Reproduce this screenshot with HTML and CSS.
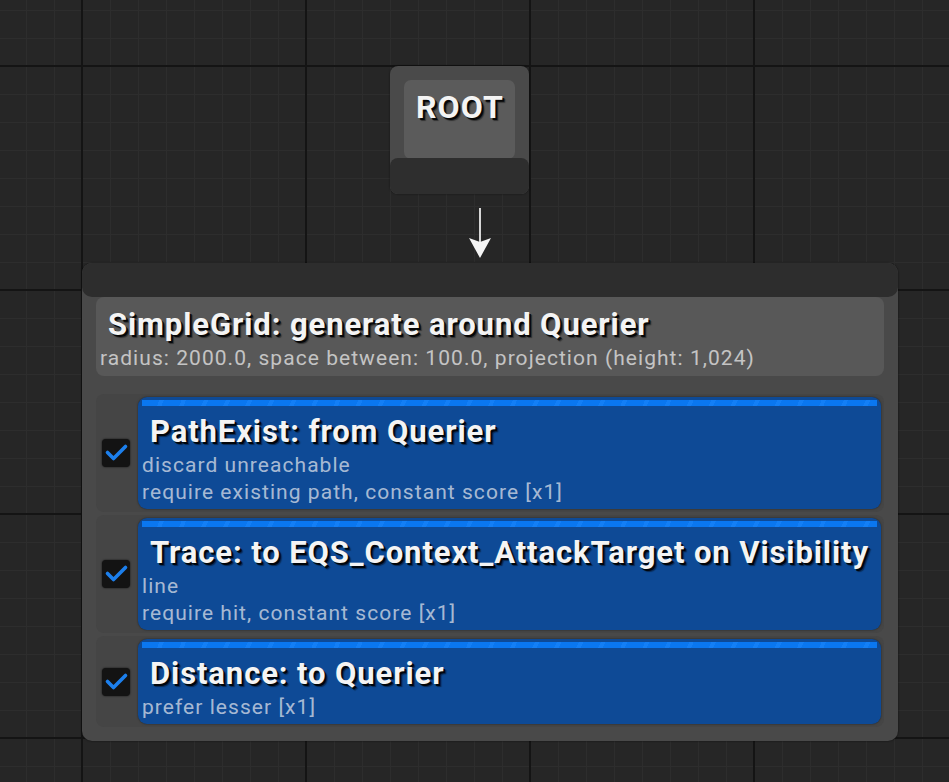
FILE: index.html
```html
<!DOCTYPE html>
<html>
<head>
<meta charset="utf-8">
<link rel="stylesheet" href="styles.css">
</head>
<body>
<div class="canvas">
  <div class="root-node">
    <div class="root-inner"><span class="title root-title">ROOT</span></div>
    <div class="root-foot"></div>
  </div>

  <svg class="wire" width="30" height="60" viewBox="0 0 30 60">
    <line x1="15" y1="2" x2="15" y2="40" stroke="#d6d6d6" stroke-width="2"/>
    <path d="M4 32 L15 36 L26 32 L15 52 Z" fill="#f4f4f4"/>
  </svg>

  <div class="query-node">
    <div class="query-head"></div>
    <div class="query-body">
      <div class="gen-block">
        <div class="title gen-title">SimpleGrid: generate around Querier</div>
        <div class="sub">radius: 2000.0, space between: 100.0, projection (height: 1,024)</div>
      </div>
      <div class="tests">
        <div class="test-row">
          <div class="check"><svg width="28" height="28" viewBox="0 0 28 28"><path d="M5.5 13.5 L11.5 19.5 L23.5 7.5" fill="none" stroke="#1c7fec" stroke-width="3.6" stroke-linecap="round" stroke-linejoin="round"/></svg></div>
          <div class="card">
            <div class="stripe"></div>
            <div class="title card-title">PathExist: from Querier</div>
            <div class="sub">discard unreachable</div>
            <div class="sub">require existing path, constant score [x1]</div>
          </div>
        </div>
        <div class="test-row">
          <div class="check"><svg width="28" height="28" viewBox="0 0 28 28"><path d="M5.5 13.5 L11.5 19.5 L23.5 7.5" fill="none" stroke="#1c7fec" stroke-width="3.6" stroke-linecap="round" stroke-linejoin="round"/></svg></div>
          <div class="card">
            <div class="stripe"></div>
            <div class="title card-title">Trace: to EQS_Context_AttackTarget on Visibility</div>
            <div class="sub">line</div>
            <div class="sub">require hit, constant score [x1]</div>
          </div>
        </div>
        <div class="test-row">
          <div class="check"><svg width="28" height="28" viewBox="0 0 28 28"><path d="M5.5 13.5 L11.5 19.5 L23.5 7.5" fill="none" stroke="#1c7fec" stroke-width="3.6" stroke-linecap="round" stroke-linejoin="round"/></svg></div>
          <div class="card">
            <div class="stripe"></div>
            <div class="title card-title">Distance: to Querier</div>
            <div class="sub">prefer lesser [x1]</div>
          </div>
        </div>
      </div>
    </div>
  </div>
</div>
</body>
</html>
```

FILE: styles.css
```css
html, body {
  margin: 0;
  padding: 0;
}
body {
  width: 949px;
  height: 782px;
  overflow: hidden;
  font-family: Roboto, "Noto Sans", sans-serif;
  background-color: #262626;
  background-image:
    linear-gradient(to right, #141414 2px, transparent 2px),
    linear-gradient(to bottom, #141414 2px, transparent 2px),
    linear-gradient(to right, #2d2d2d 1px, transparent 1px),
    linear-gradient(to bottom, #2d2d2d 1px, transparent 1px);
  background-size: 224px 224px, 224px 224px, 28px 28px, 28px 28px;
  background-position: 81px 65px, 81px 65px, 26px 10px, 26px 10px;
}
.canvas {
  position: relative;
  width: 949px;
  height: 782px;
}
.title {
  font-weight: 700;
  font-size: 31px;
  line-height: 40px;
  letter-spacing: 0.9px;
  color: #f4f4f4;
  text-shadow: 2px 2px 0 rgba(0, 0, 0, 0.85), 3px 3px 1px rgba(0, 0, 0, 0.45);
  white-space: nowrap;
}
.sub {
  font-size: 21px;
  line-height: 27px;
  letter-spacing: 1.05px;
  color: rgba(232, 232, 232, 0.76);
  white-space: nowrap;
}

/* ROOT node */
.root-node {
  position: absolute;
  left: 390px;
  top: 66px;
  width: 139px;
  height: 128px;
  background: #4a4a4a;
  border-radius: 8px;
  display: flex;
  flex-direction: column;
  box-shadow: 0 0 2px rgba(0, 0, 0, 0.6);
}
.root-inner {
  margin: 14px 14px 0;
  height: 79px;
  background: #5b5b5b;
  border-radius: 7px;
  display: flex;
  justify-content: center;
  padding-top: 7px;
  box-sizing: border-box;
}
.root-title {
  font-size: 32px;
  letter-spacing: 1.2px;
  padding-left: 1px;
}
.root-foot {
  margin-top: -1px;
  flex: 1;
  background: #2e2e2e;
  border-radius: 8px;
}

/* connector */
.wire {
  position: absolute;
  left: 465px;
  top: 206px;
}

/* query node */
.query-node {
  position: absolute;
  left: 82px;
  top: 263px;
  width: 816px;
  background: #494949;
  border-radius: 10px;
  padding-bottom: 14px;
  box-shadow: 0 0 2px rgba(0, 0, 0, 0.7);
}
.query-head {
  height: 34px;
  background: #2d2d2d;
  border-radius: 10px;
}
.query-body {
  padding: 0 14px;
}
.gen-block {
  background: #585858;
  border-radius: 8px;
  padding: 8px 4px 4px;
}
.gen-title,
.card-title {
  padding-left: 8px;
}
.tests {
  margin-top: 18px;
  display: flex;
  flex-direction: column;
  gap: 3px;
}
.test-row {
  display: flex;
  align-items: center;
  gap: 8px;
  background: #454545;
  border-radius: 8px;
  padding: 3px 3px 3px 6px;
}
.check {
  width: 28px;
  height: 28px;
  flex: none;
  background: #131313;
  border-radius: 4px;
  box-shadow: 0 0 2px rgba(0, 0, 0, 0.8);
}
.check svg {
  display: block;
}
.card {
  flex: 1;
  background: #0e4a96;
  border-radius: 9px;
  padding: 3px 4px 4px;
  box-shadow: 0 0 2px rgba(0, 0, 0, 0.5);
}
.stripe {
  height: 6px;
  margin: 0 0 5px;
  background: repeating-linear-gradient(115deg, #0a77f0 0 16px, #137ff6 16px 20px);
}
.card .title {
  padding-top: 1px;
  line-height: 39px;
}
.card .sub {
  color: rgba(225, 228, 235, 0.74);
  position: relative;
  top: 1px;
}
```
